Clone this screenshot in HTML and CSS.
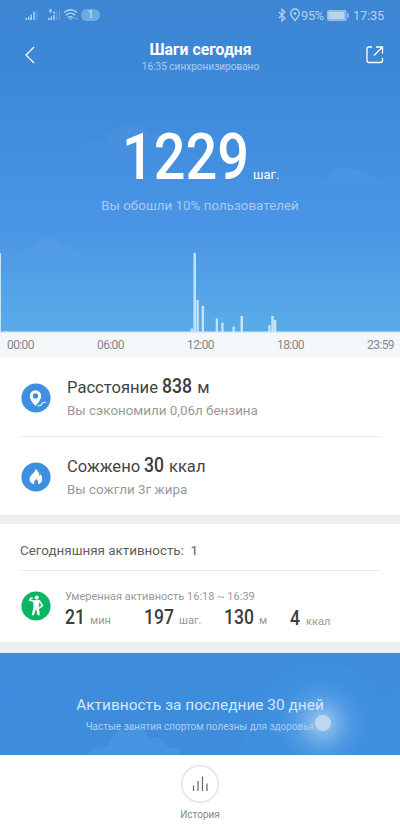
FILE: index.html
```html
<!DOCTYPE html>
<html lang="ru">
<head>
<meta charset="utf-8">
<title>Шаги сегодня</title>
<link rel="stylesheet" href="styles.css">
</head>
<body>
<main class="screen">
  <section class="hero">
    <svg class="clouds" viewBox="0 0 400 333" aria-hidden="true">
      <path d="M84 165a18 18 0 0 1 22-24a24 24 0 0 1 43-6q14-3 18 10q13 2 14 20z" fill="url(#cl)"/>
      <path d="M306 197q0-15 20-16q5-13 20-13q14 0 18 7q12-1 15 6q11 2 11 16z" fill="url(#cl)"/>
      <path d="M17 264q-1-15 16-15q5-11 16-11q9 0 13 6q8-1 10 6q11 1 11 14z" fill="url(#cl)"/>
      <defs><linearGradient id="cl" x1="0" y1="0" x2="0" y2="1"><stop stop-color="#fff" stop-opacity=".04"/><stop offset="1" stop-color="#fff" stop-opacity="0"/></linearGradient></defs>
    </svg>
    <div class="status">
      <svg class="status-left" viewBox="0 0 80 16" aria-hidden="true">
        <g fill="#b5d2f0">
          <path d="M.5 11h1.500v2H.5zM3 9.800h1.500V13H3zM5.500 7.500H7V13H5.500zM8.300 4.500h1.500V13H8.300z"/>
          <path d="M11.300 2.500h1.200V13h-1.200z" opacity=".35"/>
          <path d="M23 11h1.500v2H23zM25.500 9.500H27V13h-1.500zM28.200 8h1.500v5h-1.500zM24.500 2h2v3.500h-2zM28.500 4.500H30V7h-1.500z"/>
          <path d="M31.300 4.500h1.200V13h-1.200zM34 2.500h1.200V13H34z" opacity=".35"/>
        </g>
        <path d="M39 5.500q6.500-5.500 13 0M40.800 8.200q4.700-4 9.400 0M42.800 10.700q2.700-2.200 5 0" fill="none" stroke="#b5d2f0" stroke-width="1.300"/>
        <path d="M44 11.500h3L45.500 13zM48.300 11.500l1-1.500 1 1.500zM50.800 11.500h2L51.800 13z" fill="#b5d2f0"/>
      </svg>
      <span class="badge">1</span>
      <svg class="bt" viewBox="0 0 22 14" aria-hidden="true"><g fill="none" stroke="#b5d2f0"><path d="M.8 4l6.200 6.200L4 13V1.200L7 4 .8 10.200" stroke-width="1.200"/><path d="M17 12.500q-4.300-4.400-4.300-7.200a4.300 4.300 0 0 1 8.600 0q0 2.800-4.300 7.200z" stroke-width="1.300"/></g><circle cx="17" cy="5.500" r="1.300" fill="#b5d2f0"/></svg>
      <span class="percent">95%</span>
      <svg class="battery" viewBox="0 0 22 11" aria-hidden="true"><rect width="19.500" height="11" rx="1.500" fill="#8fbae8"/><rect x="1.500" y="2" width="15.500" height="7" fill="#b9d3ef"/><path d="M20.300 3.200h1.200v4.600h-1.200z" fill="#b9d3ef"/></svg>
      <span class="clock">17:35</span>
    </div>
    <header class="bar">
      <svg class="back" viewBox="0 0 10 18" aria-hidden="true"><path d="M9 1L1 9l8 8" fill="none" stroke="#fff" stroke-width="1.200"/></svg>
      <div class="heading"><h1>Шаги сегодня</h1><p>16:35 синхронизировано</p></div>
      <svg class="share" viewBox="0 0 18 18" aria-hidden="true"><path d="M6 1H3Q1 1 1 3v11.500q0 2 2 2h11.500q2 0 2-2V12M10 1h6.500v6.500M16.500 1L8 9.500" fill="none" stroke="#fff" stroke-width="1.300"/></svg>
    </header>
    <div class="total"><span class="big">1229</span><span class="unit">шаг.</span></div>
    <p class="rank">Вы обошли 10% пользователей</p>
    <svg class="chart" viewBox="0 0 400 81" aria-hidden="true">
      <g fill="#c4e5f8"><path d="M0 1h1v79H0zM5 79h2v1H5zM190.500 76.500h2.500v4h-2.500zM193.500 1h2.500v79h-2.500zM196.500 48h2.300v32h-2.300zM201.700 54h2.300v26h-2.300zM215.700 66.500h2.300V80h-2.300zM221.300 70.500h2.300V80h-2.300zM232.500 74.500h2.300V80h-2.300zM240.500 64h2.500v16h-2.500zM268.300 73h2.300v7h-2.300zM271.300 64h2.500v16h-2.500zM274 68h2.300v12H274z"/></g>
      <path d="M0 79.500h400v1.500H0z" fill="#d5ebfa"/>
    </svg>
  </section>
  <div class="axis"><span>00:00</span><span>06:00</span><span>12:00</span><span>18:00</span><span>23:59</span></div>

  <section class="stats">
    <article class="stat">
      <svg class="icon" viewBox="0 0 30 30" aria-hidden="true"><circle cx="15" cy="15" r="14.600" fill="#3f8fe0"/><path fill-rule="evenodd" d="M14.500 23Q8.800 17 8.800 13a5.700 5.700 0 0 1 11.400 0q0 4-5.700 10zM14.500 10.200a2.700 2.700 0 1 0 0 5.400a2.700 2.700 0 0 0 0-5.400z" fill="#fff"/><path d="M17 22.700h1.500q1.500 0 2.200-1.700t4-1.700" fill="none" stroke="#fff" stroke-width="1.100" stroke-linecap="round"/></svg>
      <div><h2>Расстояние <b class="n838">838</b> м</h2><p>Вы сэкономили 0,06л бензина</p></div>
    </article>
    <article class="stat">
      <svg class="icon" viewBox="0 0 30 30" aria-hidden="true"><circle cx="15" cy="15" r="14.600" fill="#3f8fe0"/><path d="M14.500 7q4.500 3.200 3.800 7.200q1-.7 1.200-2.200q2.200 3 1.700 6q-.6 3.300-4.200 4.300q1-3.300-2-5.300q-2.500 2-2 5.300q-4.200-1-4.500-5q0-2.300 2.200-4.600q3.600-2.600 3.800-5.700z" fill="#fff"/></svg>
      <div><h2>Сожжено <b class="n30">30</b> ккал</h2><p>Вы сожгли 3г жира</p></div>
    </article>
  </section>

  <section class="activity">
    <h3>Сегодняшняя активность:&nbsp; 1</h3>
    <div class="entry">
      <svg class="icon" viewBox="0 0 30 30" aria-hidden="true"><circle cx="15" cy="15" r="14.600" fill="#0cb563"/><circle cx="15.800" cy="6.600" r="2.100" fill="#fff"/><path d="M12.800 10h5.700l3 4.500-3.800 3M13 10.200l-4.200-1 1-2h2" fill="none" stroke="#fff" stroke-width="1.500"/><path d="M12.200 9.500h6.300l-.7 6.500 1 8.300h-2.200l-1.500-6.800-2.200 6.800h-2.200l1.800-8.300z" fill="#fff"/></svg>
      <div class="detail">
        <p>Умеренная активность 16:18 ~ 16:39</p>
        <div class="metrics">
          <span class="metric"><b class="m2">21</b>мин</span>
          <span class="metric"><b class="m3">197</b>шаг.</span>
          <span class="metric"><b class="m3">130</b>м</span>
          <span class="metric"><b class="m1">4</b>ккал</span>
        </div>
      </div>
    </div>
  </section>

  <section class="promo">
    <svg class="promo-art" viewBox="0 0 400 102" aria-hidden="true">
      <defs><radialGradient id="glow"><stop stop-color="#b8d5f2" stop-opacity=".85"/><stop offset=".25" stop-color="#9ac5ef" stop-opacity=".65"/><stop offset=".6" stop-color="#6eaeeb" stop-opacity=".3"/><stop offset="1" stop-color="#4695e6" stop-opacity="0"/></radialGradient></defs>
      <path d="M0 27q6 21 23 24h40q30 0 40 8H0z" fill="#3885d6" opacity=".12"/>
      <path d="M260 45Q285 9 322 9q34 0 58 30q8 9 16-3l4-8v74H240z" fill="#4898eb" opacity=".15"/>
      <path d="M88 102q2-9 20-9q6-19 23-19q14 0 18 11q14-3 18 9q12 0 14 8z" fill="#4c98e6" opacity=".6"/>
      <circle cx="322" cy="70" r="50" fill="url(#glow)"/>
    </svg>
    <h2>Активность за последние 30 дней</h2>
    <p>Частые занятия спортом полезны для здоровья</p>
    <i class="touch"></i>
  </section>

  <footer class="footer">
    <svg class="history" viewBox="0 0 38 38" aria-hidden="true"><circle cx="19" cy="19" r="18.400" fill="#fff" stroke="#d2d2d2"/><path d="M12.500 20.500V26M17 16v10M21.500 11.500V26M26 18.500V26" stroke="#666" stroke-width="1.200"/></svg>
    <span>История</span>
  </footer>
</main>
</body>
</html>
```
FILE: styles.css
```css
* { box-sizing: border-box; margin: 0; padding: 0; }
body { width: 400px; height: 830px; overflow: hidden; font-family: Roboto, "Noto Sans", sans-serif; background: #fff; }
h1, h2, h3 { font-weight: 400; }
svg { display: block; flex: none; }
.screen { width: 400px; height: 830px; white-space: nowrap; }
.hero { position: relative; display: flex; flex-direction: column; height: 333px; background: linear-gradient(#3c86d4 0, #3d88d7 80px, #4591e2 180px, #4b96e5 235px, #59a9e8 315px, #58aae9 333px); }
.clouds { position: absolute; inset: 0; width: 400px; height: 333px; }
.status { position: relative; display: flex; align-items: center; height: 30px; padding: 0 16px 0 25px; color: #b5d2f0; }
.status-left { width: 80px; height: 16px; margin-right: -24px; }
.badge { width: 19px; height: 12px; border-radius: 6px; background: #70a8e1; color: #d6e6f7; font-size: 10px; line-height: 12px; text-align: center; }
.bt { width: 22px; height: 14px; margin-left: auto; margin-right: 1px; }
.percent { width: 26px; font-size: 12.800px; letter-spacing: -.3px; }
.battery { width: 22px; height: 11px; margin-right: 4px; }
.clock { width: 31px; font-size: 12.800px; letter-spacing: -.2px; }
.bar { position: relative; display: grid; grid-template-columns: 18px 1fr 18px; height: 52px; padding: 9px 16px 0 25px; color: #fff; }
.back { width: 10px; height: 18px; margin-top: 7px; }
.share { width: 18px; height: 18px; margin-top: 7px; }
.heading { padding-right: 8px; text-align: center; }
.heading h1 { font-size: 15.750px; line-height: 21px; font-weight: 700; }
.heading p { font-size: 10.050px; line-height: 14px; color: #a9cdf0; }
.total { position: relative; display: flex; align-items: baseline; height: 110px; padding: 37px 0 0 122px; color: #fff; }
.big { width: 131px; font-size: 65px; line-height: 76px; font-weight: 500; transform: scaleX(.86); transform-origin: left; }
.unit { font-size: 13px; }
.rank { position: relative; height: 60px; padding-top: 5px; text-align: center; font-size: 13.400px; line-height: 18px; color: #a6cbf1; }
.chart { width: 400px; height: 81px; }
.axis { display: flex; justify-content: space-between; height: 25px; padding: 0 6px 0 7px; background: #f3f7f9; color: #858889; font-size: 12px; line-height: 25px; letter-spacing: -.6px; }
.stats { height: 166px; padding-left: 20px; border-bottom: 9px solid #ebeff1; }
.stat { display: flex; height: 78px; width: 361px; padding-top: 18px; }
.stat + .stat { border-top: 1px solid #e9ebec; }
.icon { width: 30px; height: 30px; margin-left: 1px; }
.stat .icon { margin-top: 7px; margin-right: 16px; }
.stat h2 { font-size: 16.600px; line-height: 24px; color: #444; }
.stat p { font-size: 13.400px; line-height: 18px; color: #999; margin-top: 2px; }
b { display: inline-block; font-weight: 500; color: #3d3d3d; transform: scaleX(.88); transform-origin: left; }
.stat b { font-size: 20px; line-height: 20px; }
.n838 { width: 31px; }
.n30 { width: 20.500px; }
.activity { height: 129px; padding-left: 20px; border-bottom: 11px solid #ebeff1; }
.activity h3 { width: 361px; height: 47px; border-bottom: 1px solid #ebeced; font-size: 13.400px; line-height: 53px; color: #606060; }
.entry { display: flex; padding-top: 17px; }
.entry .icon { margin-top: 3px; margin-right: 14px; }
.detail p { font-size: 11px; line-height: 17px; color: #999; }
.metrics { display: grid; grid-template-columns: 79px 80px 66px auto; line-height: 24px; }
.metric { font-size: 11px; color: #999; }
.metric:last-child { padding-top: 1px; }
.metric b { font-size: 20px; }
.m1 { width: 16px; }
.m2 { width: 25px; }
.m3 { width: 35px; }
.promo { position: relative; height: 102px; background: #3e8ddd; padding-top: 41px; text-align: center; }
.promo-art { position: absolute; inset: 0; width: 400px; height: 102px; }
.promo h2 { position: relative; font-size: 15.450px; line-height: 22px; color: #d4e6f8; }
.promo p { position: relative; font-size: 10px; line-height: 14px; margin-top: 4px; color: #a9cdf1; }
.touch { position: absolute; left: 315px; top: 62px; width: 16px; height: 16px; border-radius: 50%; background: #bed7f3; }
.footer { display: flex; flex-direction: column; align-items: center; padding-top: 10px; font-size: 10px; line-height: 14px; color: #888; }
.history { width: 38px; height: 38px; margin-bottom: 5px; }
```
